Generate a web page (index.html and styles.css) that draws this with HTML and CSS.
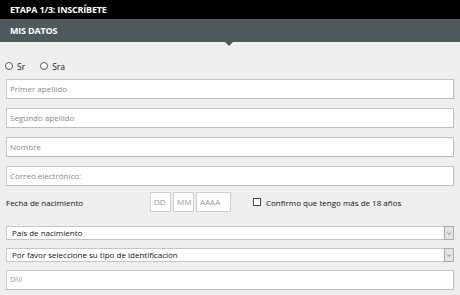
FILE: index.html
```html
<!DOCTYPE html>
<html lang="es">
<head>
<meta charset="utf-8">
<link rel="stylesheet" href="styles.css">
</head>
<body>
<div class="stage">ETAPA 1/3: INSCRÍBETE</div>
<div class="section">MIS DATOS</div>
<form class="form">
  <div class="radios">
    <label class="radio"><span class="circle"></span>Sr</label>
    <label class="radio"><span class="circle"></span>Sra</label>
  </div>
  <div class="input">Primer apellido</div>
  <div class="input">Segundo apellido</div>
  <div class="input">Nombre</div>
  <div class="input">Correo electrónico:</div>
  <div class="date-row">
    <span class="date-label">Fecha de nacimiento</span>
    <div class="date-boxes">
      <span class="dbox dd">DD</span>
      <span class="dbox mm">MM</span>
      <span class="dbox yy">AAAA</span>
    </div>
    <label class="check"><span class="box"></span>Confirmo que tengo más de 18 años</label>
  </div>
  <div class="select first"><span class="sel-text">País de nacimiento</span><span class="arrow"><svg width="9" height="12" viewBox="0 0 9 12"><path d="M2.5 5.5 L4.5 7.5 L6.5 5.5" fill="none" stroke="#777" stroke-width="1"/></svg></span></div>
  <div class="select"><span class="sel-text">Por favor seleccione su tipo de identificación</span><span class="arrow"><svg width="9" height="12" viewBox="0 0 9 12"><path d="M2.5 5.5 L4.5 7.5 L6.5 5.5" fill="none" stroke="#777" stroke-width="1"/></svg></span></div>
  <div class="input small">DNI</div>
</form>
</body>
</html>
```

FILE: styles.css
```css
* { box-sizing: border-box; }
html, body { margin: 0; padding: 0; }
body {
  width: 460px;
  height: 295px;
  overflow: hidden;
  background: #eeeeee;
  font-family: "Open Sans", "Liberation Sans", sans-serif;
  font-size: 8px;
  color: #1a1a1a;
}
.stage {
  background: #000;
  color: #fff;
  height: 19px;
  line-height: 19px;
  padding-left: 10px;
  font-weight: 700;
  font-size: 9px;
  letter-spacing: -0.2px;
}
.section {
  position: relative;
  background: #4f5a5f;
  color: #fff;
  height: 23px;
  line-height: 23px;
  padding-left: 10px;
  font-weight: 700;
  font-size: 9px;
  letter-spacing: -0.2px;
}
.section::after {
  content: "";
  position: absolute;
  left: 225px;
  bottom: -4px;
  border-left: 4px solid transparent;
  border-right: 4px solid transparent;
  border-top: 4px solid #4f5a5f;
}
.form {
  padding: 0 6px 0 6px;
}
.radios {
  display: flex;
  gap: 16px;
  height: 12px;
  margin-top: 18px;
  margin-bottom: 7px;
  align-items: center;
}
.radio {
  display: flex;
  align-items: center;
  gap: 4px;
  color: #1a1a1a;
  font-size: 8.5px;
}
.circle {
  width: 8px;
  height: 8px;
  border: 1px solid #555;
  border-radius: 50%;
  background: #fff;
  margin-left: -1px;
}
.input {
  height: 20px;
  background: #fff;
  border: 1px solid #c6c6c6;
  border-right-color: #bcbcbc;
  border-bottom-color: #bcbcbc;
  color: #888;
  padding-left: 3px;
  line-height: 18px;
  width: 448px;
  margin-bottom: 9px;
}
.date-row {
  display: flex;
  align-items: center;
  height: 20px;
  margin-top: -3px;
  margin-bottom: 14px;
}
.date-label {
  width: 144px;
  color: #111;
}
.date-boxes {
  display: flex;
  gap: 2px;
}
.dbox {
  height: 20px;
  border: 1px solid #cfcfcf;
  background: #fff;
  color: #999;
  line-height: 18px;
  padding-left: 3px;
}
.dd { width: 21px; }
.mm { width: 21px; }
.yy { width: 35px; }
.check {
  display: flex;
  align-items: center;
  gap: 5px;
  margin-left: 22px;
  color: #111;
}
.box {
  width: 8px;
  height: 8px;
  border: 1px solid #444;
  background: #fff;
}
.select {
  display: flex;
  height: 14px;
  width: 448px;
  background: #fff;
  border: 1px solid #c6c6c6;
  color: #111;
  margin-bottom: 8px;
}
.sel-text {
  flex: 1;
  padding-left: 5px;
  line-height: 12px;
}
.arrow {
  width: 10px;
  height: 14px;
  margin: -1px -1px 0 0;
  background: #e4e4e4;
  border: 1px solid #aaa;
  display: flex;
  align-items: center;
  justify-content: center;
}
.input.small {
  font-size: 7px;
  color: #999;
}
```
